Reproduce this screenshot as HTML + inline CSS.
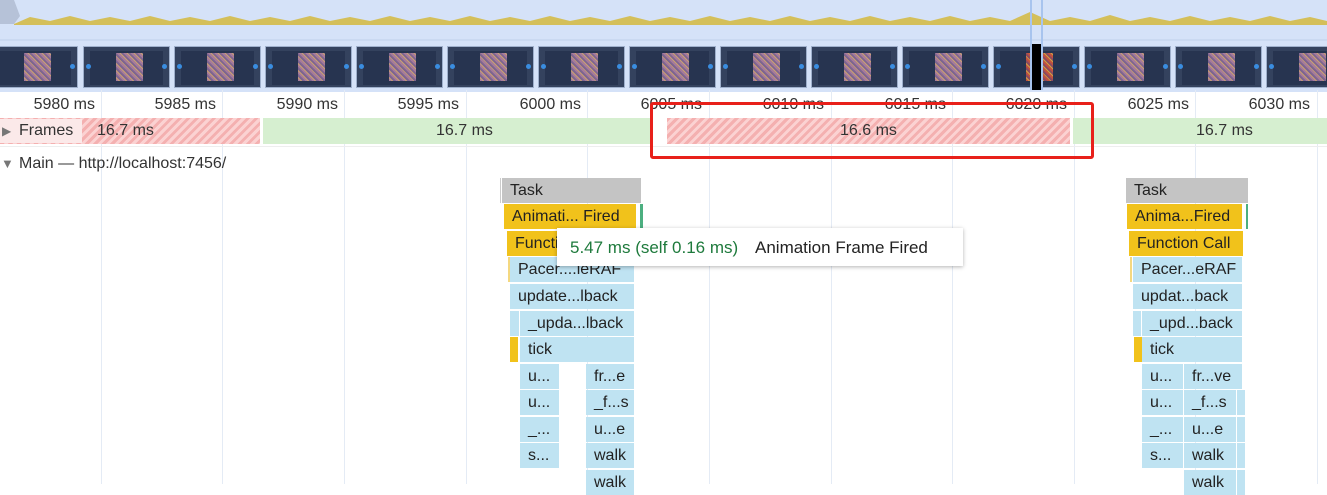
<!DOCTYPE html>
<html><head><style>
*{margin:0;padding:0;box-sizing:border-box}
body{width:1327px;height:484px;overflow:hidden;background:#fff;font-family:"Liberation Sans","DejaVu Sans",sans-serif;font-size:16px;color:#333;position:relative}
.a{position:absolute}
.g{position:absolute;top:90px;width:1px;height:394px;background:#e4ebf5}
.lbl{position:absolute;top:96px;font-size:16px;color:#333;text-align:right;width:100px}
.th{position:absolute;top:46px;width:87px;height:42px;background:#34425e;border:1px solid #9fb0cc}
.th s{position:absolute;left:6px;top:4px;width:73px;height:34px;background:#273450}
.th i{position:absolute;left:32px;top:6px;width:27px;height:28px;background:repeating-linear-gradient(45deg,#a57a9a 0 2px,#c9a070 2px 3px,#7d6590 3px 5px)}
.th b{position:absolute;left:2px;top:17px;width:5px;height:5px;border-radius:50%;background:#3a8de0}
.th u{position:absolute;right:2px;top:17px;width:5px;height:5px;border-radius:50%;background:#3a8de0}
.red{position:absolute;top:118px;height:26px;background:repeating-linear-gradient(135deg,#f4b0b0 0 3px,#fbd2d2 3px 6px)}
.grn{position:absolute;top:118px;height:26px;background:#d6efd0}
.ft{position:absolute;top:122px;font-size:16px;color:#333}
.b{position:absolute;height:25px;line-height:25px;font-size:16px;color:#222;padding-left:8px;white-space:nowrap;overflow:hidden}
.t{background:#c4c4c4}.y{background:#f1c21b}.c{background:#bfe3f2}
</style></head><body>
<div class="a" style="left:0;top:0;width:1327px;height:42px;background:#d5e2f8"></div>
<svg class="a" style="left:0;top:0" width="1327" height="42">
<path d="M0 0 L14 0 L20 16 L14 24 L0 24Z" fill="#b6c2d8"/>
<path d="M14 24 L30 17 L50 21 L70 16 L90 21 L110 17 L130 21 L150 16 L170 21 L190 17 L210 21 L230 16 L250 21 L270 17 L290 21 L310 16 L330 21 L350 17 L370 21 L390 16 L410 21 L430 17 L450 21 L470 16 L490 21 L510 17 L530 21 L550 16 L570 21 L590 17 L610 21 L630 16 L650 21 L670 17 L690 21 L710 16 L730 21 L750 17 L770 21 L790 16 L810 21 L830 17 L850 21 L870 16 L890 21 L910 17 L930 21 L950 16 L970 21 L990 17 L1010 21 L1030 12 L1050 21 L1070 17 L1090 21 L1110 15 L1130 21 L1150 17 L1170 21 L1190 16 L1210 21 L1230 17 L1250 21 L1270 16 L1290 21 L1310 17 L1327 21 L1327 25 L14 25Z" fill="#d4bf5a"/>
<line x1="0" y1="40" x2="1327" y2="40" stroke="#c0d0ea"/>
</svg>
<div class="a" style="left:0;top:42px;width:1327px;height:50px;background:#d5e2f8"></div>
<div class="th" style="left:-9px"><s></s><i></i><u></u></div>
<div class="th" style="left:83px"><s></s><i></i><b></b><u></u></div>
<div class="th" style="left:174px"><s></s><i></i><b></b><u></u></div>
<div class="th" style="left:265px"><s></s><i></i><b></b><u></u></div>
<div class="th" style="left:356px"><s></s><i></i><b></b><u></u></div>
<div class="th" style="left:447px"><s></s><i></i><b></b><u></u></div>
<div class="th" style="left:538px"><s></s><i></i><b></b><u></u></div>
<div class="th" style="left:629px"><s></s><i></i><b></b><u></u></div>
<div class="th" style="left:720px"><s></s><i></i><b></b><u></u></div>
<div class="th" style="left:811px"><s></s><i></i><b></b><u></u></div>
<div class="th" style="left:902px"><s></s><i></i><b></b><u></u></div>
<div class="th" style="left:993px"><s></s><i style="background:repeating-linear-gradient(45deg,#c05040 0 2px,#d0a040 2px 3px,#8a4a60 3px 5px)"></i><b></b><u></u></div>
<div class="a" style="left:1030px;top:44px;width:12px;height:46px;background:#000"></div>
<div class="a" style="left:1030px;top:0;width:2px;height:90px;background:#a8c4ee"></div>
<div class="a" style="left:1041px;top:0;width:2px;height:90px;background:#a8c4ee"></div>
<div class="th" style="left:1084px"><s></s><i></i><b></b><u></u></div>
<div class="th" style="left:1175px"><s></s><i></i><b></b><u></u></div>
<div class="th" style="left:1266px"><s></s><i></i><b></b><u></u></div>

<div class="g" style="left:101px"></div><div class="g" style="left:222px"></div><div class="g" style="left:344px"></div><div class="g" style="left:466px"></div><div class="g" style="left:587px"></div><div class="g" style="left:709px"></div><div class="g" style="left:831px"></div><div class="g" style="left:952px"></div><div class="g" style="left:1074px"></div><div class="g" style="left:1195px"></div><div class="g" style="left:1317px"></div>
<div class="lbl" style="left:-5px">5980 ms</div><div class="lbl" style="left:116px">5985 ms</div><div class="lbl" style="left:238px">5990 ms</div><div class="lbl" style="left:359px">5995 ms</div><div class="lbl" style="left:481px">6000 ms</div><div class="lbl" style="left:602px">6005 ms</div><div class="lbl" style="left:724px">6010 ms</div><div class="lbl" style="left:846px">6015 ms</div><div class="lbl" style="left:967px">6020 ms</div><div class="lbl" style="left:1089px">6025 ms</div><div class="lbl" style="left:1210px">6030 ms</div>

<div class="red" style="left:0;width:260px"></div>
<div class="grn" style="left:263px;width:388px"></div>
<div class="red" style="left:667px;width:403px"></div>
<div class="grn" style="left:1073px;width:254px"></div>
<div class="a" style="left:0;top:119px;width:82px;height:24px;background:#fbe9e9"></div>
<div class="ft" style="left:2px;font-size:12px;top:124px;color:#777">▶</div>
<div class="ft" style="left:19px">Frames</div>
<div class="ft" style="left:97px">16.7 ms</div>
<div class="ft" style="left:436px">16.7 ms</div>
<div class="ft" style="left:840px">16.6 ms</div>
<div class="ft" style="left:1196px">16.7 ms</div>
<div class="a" style="left:0;top:146px;width:1327px;height:1px;background:#eee"></div>
<div class="a" style="left:650px;top:102px;width:444px;height:57px;border:3px solid #e8201a;border-radius:3px"></div>
<div class="ft" style="left:1px;top:156px;font-size:13px;color:#777">▼</div>
<div class="ft" style="left:19px;top:155px">Main — http://localhost:7456/</div>

<div class="b t" style="left:502px;top:178px;width:139px">Task</div>
<div class="a" style="left:500px;top:178px;width:1px;height:25px;background:#ccc"></div>
<div class="b y" style="left:504px;top:204px;width:132px">Animati... Fired</div>
<div class="a" style="left:640px;top:204px;width:3px;height:25px;background:#4caf80"></div>
<div class="b y" style="left:507px;top:231px;width:128px">Function Call</div>
<div class="a" style="left:508px;top:257px;width:2px;height:25px;background:#f4d880"></div>
<div class="b c" style="left:510px;top:257px;width:124px">Pacer....ieRAF</div>
<div class="b c" style="left:510px;top:284px;width:124px">update...lback</div>
<div class="b c" style="left:510px;top:311px;width:9px"></div>
<div class="b c" style="left:520px;top:311px;width:114px">_upda...lback</div>
<div class="b y" style="left:510px;top:337px;width:8px"></div>
<div class="b c" style="left:520px;top:337px;width:114px">tick</div>
<div class="b c" style="left:520px;top:364px;width:39px">u...</div><div class="b c" style="left:586px;top:364px;width:48px">fr...e</div>
<div class="b c" style="left:520px;top:390px;width:39px">u...</div><div class="b c" style="left:586px;top:390px;width:48px">_f...s</div>
<div class="b c" style="left:520px;top:417px;width:39px">_...</div><div class="b c" style="left:586px;top:417px;width:48px">u...e</div>
<div class="b c" style="left:520px;top:443px;width:39px">s...</div><div class="b c" style="left:586px;top:443px;width:48px">walk</div>
<div class="b c" style="left:586px;top:470px;width:48px">walk</div>

<div class="a" style="left:557px;top:228px;width:406px;height:38px;background:#fff;box-shadow:0 1px 4px rgba(0,0,0,.3)"></div>
<div class="a" style="left:570px;top:238px;font-size:17px;color:#1e7a3c;white-space:nowrap">5.47 ms (self 0.16 ms)</div>
<div class="a" style="left:755px;top:238px;font-size:17px;color:#222;white-space:nowrap">Animation Frame Fired</div>

<div class="b t" style="left:1126px;top:178px;width:122px">Task</div>
<div class="b y" style="left:1127px;top:204px;width:115px">Anima...Fired</div>
<div class="a" style="left:1246px;top:204px;width:2px;height:25px;background:#4caf80"></div>
<div class="b y" style="left:1129px;top:231px;width:114px">Function Call</div>
<div class="a" style="left:1130px;top:257px;width:2px;height:25px;background:#f4d880"></div>
<div class="b c" style="left:1133px;top:257px;width:109px">Pacer...eRAF</div>
<div class="b c" style="left:1133px;top:284px;width:109px">updat...back</div>
<div class="b c" style="left:1133px;top:311px;width:7px"></div>
<div class="b c" style="left:1142px;top:311px;width:100px">_upd...back</div>
<div class="b y" style="left:1134px;top:337px;width:6px"></div>
<div class="b c" style="left:1142px;top:337px;width:100px">tick</div>
<div class="b c" style="left:1142px;top:364px;width:41px">u...</div><div class="b c" style="left:1184px;top:364px;width:58px">fr...ve</div>
<div class="b c" style="left:1142px;top:390px;width:41px">u...</div><div class="b c" style="left:1184px;top:390px;width:52px">_f...s</div><div class="b c" style="left:1237px;top:390px;width:5px"></div>
<div class="b c" style="left:1142px;top:417px;width:41px">_...</div><div class="b c" style="left:1184px;top:417px;width:52px">u...e</div><div class="b c" style="left:1237px;top:417px;width:5px"></div>
<div class="b c" style="left:1142px;top:443px;width:41px">s...</div><div class="b c" style="left:1184px;top:443px;width:52px">walk</div><div class="b c" style="left:1237px;top:443px;width:5px"></div>
<div class="b c" style="left:1184px;top:470px;width:52px">walk</div><div class="b c" style="left:1237px;top:470px;width:5px"></div>
</body></html>
